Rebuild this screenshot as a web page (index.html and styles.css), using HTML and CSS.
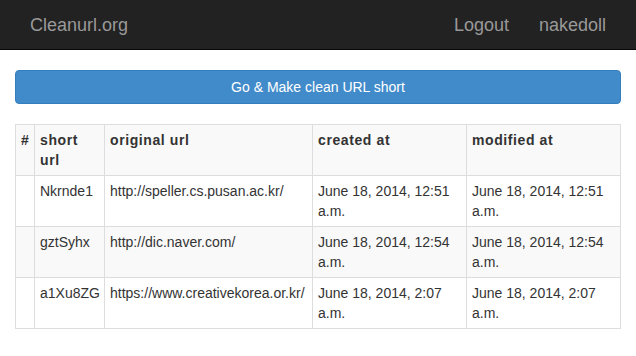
FILE: index.html
```html
<!DOCTYPE html>
<html lang="en">
<head>
    <meta charset="UTF-8">
    <meta name="viewport" content="width=device-width, initial-scale=1.0">
    <title>Cleanurl.org</title>
    <link rel="stylesheet" href="styles.css">
</head>
<body>
    <nav class="navbar">
        <a class="brand" href="#">Cleanurl.org</a>
        <ul class="nav-right">
            <li><a href="#">Logout</a></li>
            <li><a href="#">nakedoll</a></li>
        </ul>
    </nav>

    <div class="container">
        <a class="btn-primary" href="#">Go &amp; Make clean URL short</a>

        <table class="url-table">
            <colgroup>
                <col class="c-num">
                <col class="c-short">
                <col class="c-orig">
                <col class="c-date">
                <col class="c-date">
            </colgroup>
            <tbody>
                <tr>
                    <th>#</th>
                    <th>short url</th>
                    <th>original url</th>
                    <th>created at</th>
                    <th>modified at</th>
                </tr>
                <tr>
                    <td></td>
                    <td>Nkrnde1</td>
                    <td>http://speller.cs.pusan.ac.kr/</td>
                    <td>June 18, 2014, 12:51 a.m.</td>
                    <td>June 18, 2014, 12:51 a.m.</td>
                </tr>
                <tr>
                    <td></td>
                    <td>gztSyhx</td>
                    <td>http://dic.naver.com/</td>
                    <td>June 18, 2014, 12:54 a.m.</td>
                    <td>June 18, 2014, 12:54 a.m.</td>
                </tr>
                <tr>
                    <td></td>
                    <td>a1Xu8ZG</td>
                    <td>https://www.creativekorea.or.kr/</td>
                    <td>June 18, 2014, 2:07 a.m.</td>
                    <td>June 18, 2014, 2:07 a.m.</td>
                </tr>
            </tbody>
        </table>
    </div>
</body>
</html>
```

FILE: styles.css
```css
body {
    margin: 0;
    font-family: "Liberation Sans", Arial, sans-serif;
    font-size: 14px;
    line-height: 20px;
    color: #333;
    background: #fff;
}
a { text-decoration: none; }

.navbar {
    display: flex;
    justify-content: space-between;
    height: 50px;
    padding: 0 15px;
    background: #222;
    border-bottom: 1px solid #080808;
    box-sizing: border-box;
}
.brand {
    padding: 15px;
    font-size: 18px;
    line-height: 20px;
    color: #999;
}
.nav-right {
    display: flex;
    margin: 0;
    padding: 0;
    list-style: none;
}
.nav-right a {
    display: block;
    padding: 15px;
    font-size: 18px;
    line-height: 20px;
    color: #999;
}

.container {
    padding: 20px 15px 0;
}
.btn-primary {
    display: block;
    padding: 6px 12px;
    text-align: center;
    color: #fff;
    background: #428bca;
    border: 1px solid #357ebd;
    border-radius: 4px;
}

.url-table {
    width: 100%;
    margin-top: 20px;
    border-collapse: collapse;
    table-layout: fixed;
    border: 1px solid #ddd;
}
.c-num { width: 19px; }
.c-short { width: 70px; }
.c-orig { width: 208px; }
.c-date { width: 154px; }
.url-table th,
.url-table td {
    padding: 5px;
    border: 1px solid #ddd;
    text-align: left;
    vertical-align: top;
    line-height: 20px;
}
.url-table th {
    font-weight: bold;
    letter-spacing: 0.6px;
}
.url-table tr:nth-child(odd) th,
.url-table tr:nth-child(odd) td { background: #f9f9f9; }
```
